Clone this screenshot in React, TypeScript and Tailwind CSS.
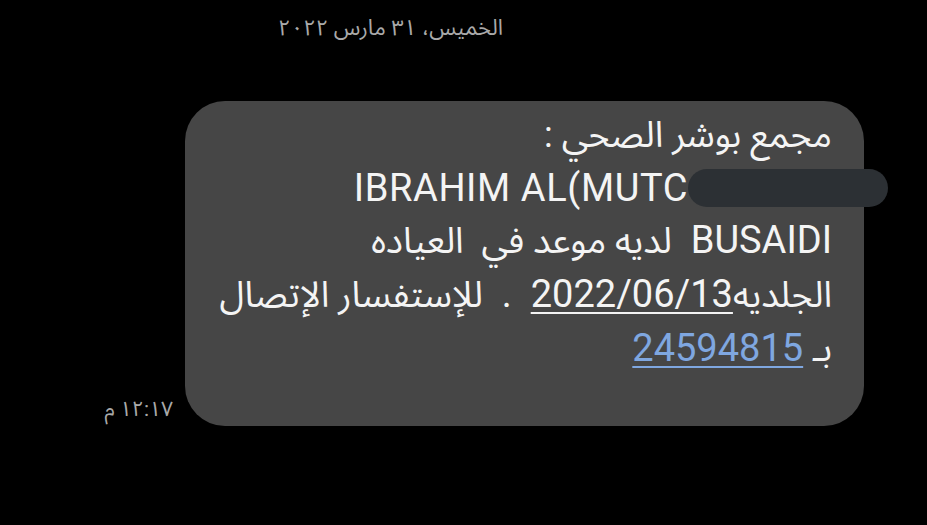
const font = "font-['Roboto','Noto_Sans_Arabic','DejaVu_Sans',sans-serif]";

function Ar({ children }: { children: React.ReactNode }) {
  return <span className="text-[36px]">{children}</span>;
}

export default function App() {
  return (
    <div className={`w-[927px] h-[525px] overflow-hidden bg-black ${font}`}>
      {/* date header */}
      <div className="h-[101px] flex justify-center pr-[146px] pt-[14px]">
        <div dir="rtl" className="text-[22px] leading-[28px] text-[#a9a9a9]">
          الخميس، ٣١ مارس ٢٠٢٢
        </div>
      </div>

      {/* message row */}
      <div className="flex items-end">
        <div className="w-[185px] pr-3 pb-[4px] flex justify-end text-[21px] leading-[26px] text-[#a9a9a9]">
          <span dir="rtl">١٢:١٧ م</span>
        </div>

        <div className="relative w-[679px] h-[325px] rounded-[40px] bg-[#464646] pt-[7px] pr-[32px] text-[38px] leading-[52.7px] text-[#f4f4f4]">
          <div dir="rtl" className="text-right whitespace-pre">
            <Ar>مجمع بوشر الصحي :</Ar>
          </div>
          <div dir="ltr" className="text-right whitespace-pre pr-[144px] tracking-[0.6px]">IBRAHIM AL(MUTC</div>
          <div dir="rtl" className="text-right whitespace-pre">
            BUSAIDI  <Ar>لديه موعد في  العياده</Ar>
          </div>
          <div dir="rtl" className="text-right whitespace-pre">
            <Ar>الجلديه</Ar>
            <span className="underline underline-offset-[5px] decoration-2">2022/06/13</span>
            {'  .  '}
            <Ar>للإستفسار الإتصال</Ar>
          </div>
          <div dir="rtl" className="text-right whitespace-pre">
            <Ar>بـ</Ar>{' '}
            <span className="text-[#7fa7e0] underline underline-offset-[5px] decoration-2">24594815</span>
          </div>

          {/* redaction */}
          <div className="absolute left-[503px] top-[68px] w-[200px] h-[38px] rounded-full bg-[#2c3034]" />
        </div>
      </div>
    </div>
  );
}
